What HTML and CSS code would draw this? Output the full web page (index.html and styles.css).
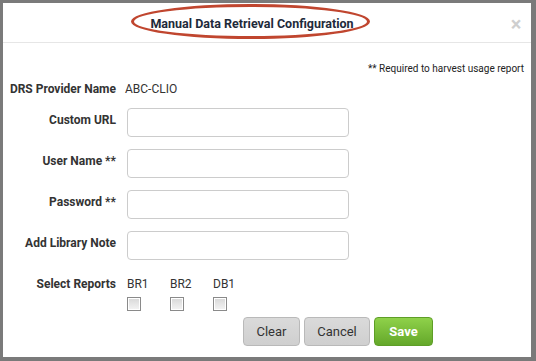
FILE: index.html
```html
<!DOCTYPE html>
<html>
<head>
<meta charset="utf-8">
<link rel="stylesheet" href="styles.css">
</head>
<body>
<div class="modal">
  <div class="header">
    <div class="title">Manual Data Retrieval Configuration</div>
    <div class="close">&times;</div>
    <div class="oval"></div>
  </div>
  <div class="content">
    <div class="note">** Required to harvest usage report</div>
    <div class="row info">
      <div class="label">DRS Provider Name</div>
      <div class="value">ABC-CLIO</div>
    </div>
    <div class="row field">
      <div class="label">Custom URL</div>
      <input class="input" type="text">
    </div>
    <div class="row field">
      <div class="label">User Name **</div>
      <input class="input" type="text">
    </div>
    <div class="row field">
      <div class="label">Password **</div>
      <input class="input" type="password">
    </div>
    <div class="row field">
      <div class="label">Add Library Note</div>
      <input class="input" type="text">
    </div>
    <div class="row reports">
      <div class="label">Select Reports</div>
      <div class="report-list">
        <div class="report"><span>BR1</span><input class="check" type="checkbox"></div>
        <div class="report"><span>BR2</span><input class="check" type="checkbox"></div>
        <div class="report"><span>DB1</span><input class="check" type="checkbox"></div>
      </div>
    </div>
    <div class="actions">
      <button class="btn">Clear</button>
      <button class="btn">Cancel</button>
      <button class="btn save">Save</button>
    </div>
  </div>
</div>
</body>
</html>
```

FILE: styles.css
```css
html, body {
  margin: 0;
  padding: 0;
}
body {
  background: #7a7a7a;
  width: 536px;
  height: 361px;
  padding: 3px 5px 4px 3px;
  box-sizing: border-box;
  font-family: Roboto, "Liberation Sans", Arial, sans-serif;
  color: #333;
}
.modal {
  background: #fff;
  height: 354px;
  position: relative;
}
.header {
  height: 39px;
  border-bottom: 1px solid #e6e6e6;
  display: flex;
  align-items: center;
  position: relative;
}
.title {
  flex: 1;
  text-align: center;
  font-size: 12.5px;
  font-weight: 700;
  color: #1e2a3a;
  padding-top: 1px;
}
.close {
  width: 30px;
  text-align: center;
  font-size: 20px;
  font-weight: 700;
  color: #cfcfcf;
  line-height: 20px;
  padding-top: 3px;
}
.oval {
  position: absolute;
  left: 128px;
  top: 1px;
  width: 233px;
  height: 29px;
  border: 3px solid #c0462f;
  border-radius: 50%;
}
.content {
  padding: 19px 7px 0 0;
}
.note {
  text-align: right;
  font-size: 10px;
  line-height: 14px;
  color: #222;
}
.row {
  display: flex;
}
.label {
  width: 113px;
  text-align: right;
  font-size: 12px;
  font-weight: 700;
  line-height: 16px;
  margin-right: 11px;
  flex: none;
}
.info {
  margin-top: 5px;
  align-items: center;
}
.value {
  font-size: 12px;
  line-height: 16px;
  margin-left: -2px;
  color: #333;
}
.field {
  margin-top: 12px;
  align-items: flex-start;
}
.info + .field {
  margin-top: 11px;
}
.field .label {
  padding-top: 4px;
}
.input {
  width: 222px;
  height: 29px;
  box-sizing: border-box;
  border: 1px solid #cccccc;
  border-radius: 4px;
  margin: 0;
  padding: 0 6px;
  background: #fff;
}
.reports {
  margin-top: 16px;
  align-items: flex-start;
}
.report-list {
  display: flex;
}
.report {
  width: 43px;
  display: flex;
  flex-direction: column;
  align-items: flex-start;
  font-size: 12px;
  line-height: 16px;
}
.check {
  appearance: none;
  -webkit-appearance: none;
  margin: 5px 0 0 0;
  width: 14px;
  height: 14px;
  box-sizing: border-box;
  border: 1px solid #8a8a8a;
  box-shadow: inset 0 0 0 1px #fff;
  background: linear-gradient(#d8d8d8, #f4f4f4);
}
.actions {
  display: flex;
  justify-content: flex-end;
  gap: 4px;
  margin-top: 6px;
  padding-right: 91px;
}
.btn {
  height: 29px;
  margin: 0;
  padding: 0;
  font-family: Roboto, "Liberation Sans", Arial, sans-serif;
  font-size: 13px;
  color: #333;
  background: linear-gradient(#dadada, #cfcfcf);
  border: 1px solid #b9b9b9;
  border-radius: 4px;
  width: 57px;
}
.btn + .btn {
  width: 66px;
}
.btn.save {
  width: 59px;
  color: #fff;
  font-weight: 700;
  background: linear-gradient(#8fd14a, #64a82a);
  border-color: #5e9e27;
}
```
